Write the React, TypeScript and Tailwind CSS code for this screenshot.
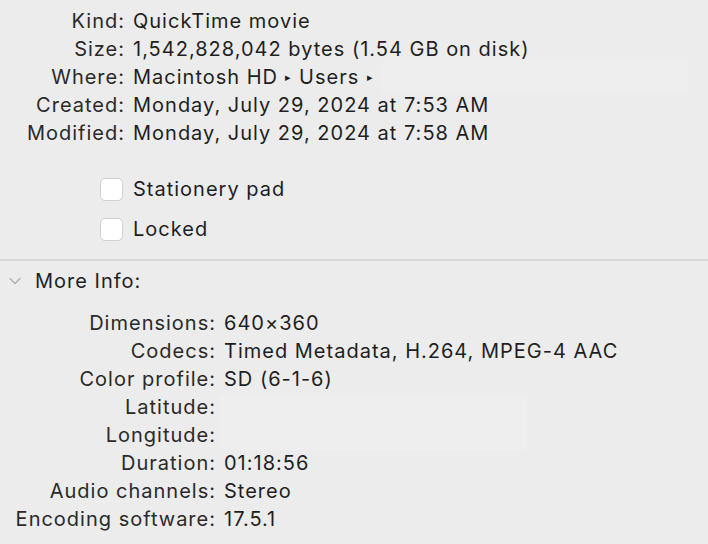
import React from 'react';

const font = { fontFamily: 'Inter, "Noto Sans", sans-serif' };

const Row = ({ label, value, labelW }: { label: string; value?: React.ReactNode; labelW: string }) => (
  <div className="flex h-[28px] items-center">
    <div className={`${labelW} shrink-0 text-right text-[#2a2a2a]`}>{label}:</div>
    <div className="pl-[8px] text-[#1f1f1f] whitespace-nowrap">{value}</div>
  </div>
);

const Checkbox = ({ label }: { label: string }) => (
  <div className="flex h-[40px] items-center pl-[100px]">
    <div className="w-[23px] h-[23px] rounded-[5px] border border-[#d0d0d0] bg-white" />
    <span className="pl-[10px] text-[#1f1f1f]">{label}</span>
  </div>
);

export default function App() {
  return (
    <div className="w-[708px] h-[544px] bg-[#ececec] overflow-hidden text-[20px] leading-none tracking-[1px]" style={font}>
      <div className="pt-[7px]">
        <Row labelW="w-[125px]" label="Kind" value="QuickTime movie" />
        <Row labelW="w-[125px]" label="Size" value="1,542,828,042 bytes (1.54 GB on disk)" />
        <Row
          labelW="w-[125px]"
          label="Where"
          value={
            <div className="flex items-center">
              <span>Macintosh HD</span>
              <span className="px-[7px] text-[11px]">▸</span>
              <span>Users</span>
              <span className="px-[8px] text-[11px]">▸</span>
              <div className="w-[306px] h-[32px] bg-[#eeeeee]" />
            </div>
          }
        />
        <Row labelW="w-[125px]" label="Created" value="Monday, July 29, 2024 at 7:53 AM" />
        <Row labelW="w-[125px]" label="Modified" value="Monday, July 29, 2024 at 7:58 AM" />
      </div>
      <div className="pt-[22px]">
        <Checkbox label="Stationery pad" />
        <Checkbox label="Locked" />
      </div>
      <div className="mt-[10px] border-t-2 border-[#d6d6d6]" />
      <div className="flex h-[40px] items-center pl-[8px]">
        <svg width="14" height="10" viewBox="0 0 14 10" fill="none" stroke="#b5b5b5" strokeWidth="1.6" strokeLinecap="round" strokeLinejoin="round">
          <path d="M2 2.5l5 5 5-5" />
        </svg>
        <span className="pl-[13px] text-[#1f1f1f]">More Info:</span>
      </div>
      <div className="pt-[8px]">
        <Row labelW="w-[216px]" label="Dimensions" value="640×360" />
        <Row labelW="w-[216px]" label="Codecs" value="Timed Metadata, H.264, MPEG-4 AAC" />
        <Row labelW="w-[216px]" label="Color profile" value="SD (6-1-6)" />
        <div className="relative">
          <Row labelW="w-[216px]" label="Latitude" />
          <Row labelW="w-[216px]" label="Longitude" />
          <div className="absolute left-[220px] top-[3px] w-[307px] h-[54px] bg-[#eeeeee]" />
        </div>
        <Row labelW="w-[216px]" label="Duration" value="01:18:56" />
        <Row labelW="w-[216px]" label="Audio channels" value="Stereo" />
        <Row labelW="w-[216px]" label="Encoding software" value="17.5.1" />
      </div>
    </div>
  );
}
